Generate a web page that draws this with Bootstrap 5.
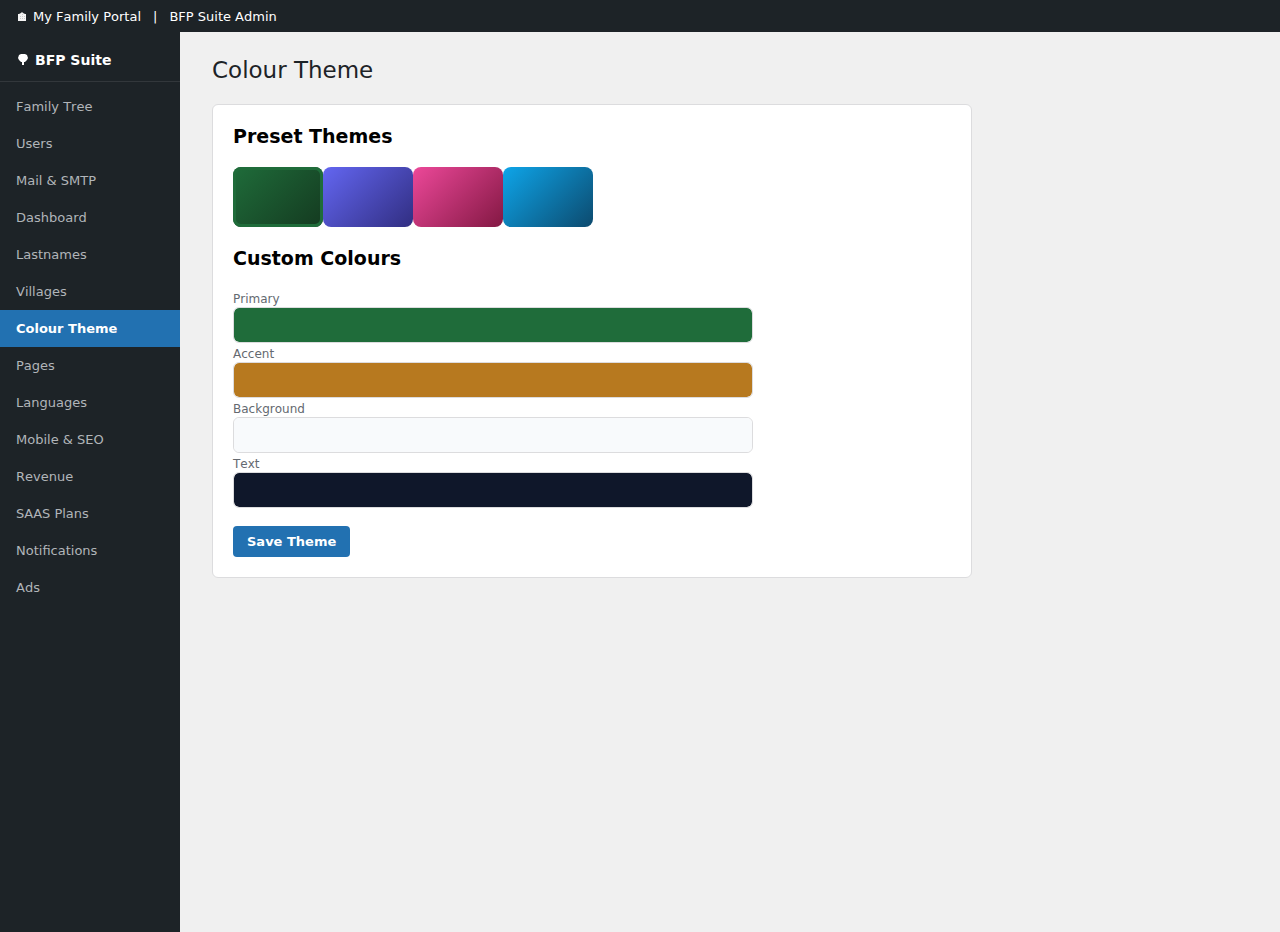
<!DOCTYPE html>
<html lang="en">
<head>
<meta charset="utf-8">
<meta name="viewport" content="width=device-width, initial-scale=1">
<title>Colour Theme</title>
<link href="https://cdn.jsdelivr.net/npm/bootstrap@5.3.0/dist/css/bootstrap.min.css" rel="stylesheet">
<style>
  body { font-family: "DejaVu Sans", sans-serif; font-size: 13px; line-height: 21px; font-kerning: none; color: #1d2327; background: #f0f0f0; }
  .topbar { height: 32px; background: #1d2327; color: #fff; gap: 12px; }
  .topbar a, .brand { color: #fff; text-decoration: none; }
  .site-link { gap: 4px; }
  .sidebar { width: 180px; background: #1d2327; }
  .brand { gap: 5px; height: 50px; padding: 8px 16px 0; font-size: 14px; font-weight: 700; border-bottom: 1px solid #32373b; }
  .menu { padding-top: 6px; }
  .menu .nav-link { padding: 8px 16px; color: #b1b5b9; transition: none; }
  .menu .nav-link:hover { color: #fff; }
  .menu .nav-link.active { background: #2271b1; color: #fff; font-weight: 700; }
  main { padding: 24px 32px; }
  h1 { font-size: 23px; line-height: 28px; font-weight: 400; margin: 0 0 20px; }
  h2 { font-size: 19px; line-height: 22px; font-weight: 700; color: #000; margin: 0 0 19px; }
  .panel { max-width: 760px; padding: 20px; border: 1px solid #dcdcde; border-radius: 6px; background: #fff; }
  .presets { margin: 20px 0; }
  .swatch { width: 90px; height: 60px; padding: 0; border: 0; border-radius: 8px; }
  .forest { background: linear-gradient(135deg, #1f6c3a, #143a20); box-shadow: inset 0 0 0 3px #1f6c3a; }
  .indigo { background: linear-gradient(135deg, #6366f1, #312e81); }
  .rose { background: linear-gradient(135deg, #ec4899, #831843); }
  .sky { background: linear-gradient(135deg, #0ea5e9, #0c4a6e); }
  .colours { max-width: 520px; margin-bottom: 18px; }
  .colours label { font-size: 12px; line-height: 16px; padding-top: 3px; color: #646970; }
  .colours input { height: 36px; padding: 0; border: 1px solid #dcdcde; border-radius: 6px; background: #fff; overflow: hidden; }
  .colours input::-webkit-color-swatch-wrapper { padding: 0; }
  .colours input::-webkit-color-swatch { border: 0; border-radius: 5px; }
  .save { padding: 5px 14px; border: 0; border-radius: 4px; background: #2271b1; color: #fff; font-size: 13px; line-height: 21px; font-weight: 700; }
</style>
</head>
<body class="d-flex flex-column min-vh-100">
<header class="topbar d-flex align-items-center px-3">
  <a class="site-link d-flex align-items-center" href="#">
    <svg width="13" height="14" viewBox="0 0 13 14" aria-hidden="true">
      <path fill="#f4f4f4" d="M2 5h1l2-1 1-1 1 1 2 1h1v7H2z"/>
      <path fill="#c8cacb" d="M4 7h1v1H4zM6 7h1v1H6zM8 7h1v1H8zM4 9h1v1H4zM6 9h1v1H6zM8 9h1v1H8zM6 5h1v1H6z"/>
    </svg>
    <span>My Family Portal</span>
  </a>
  <span>|</span>
  <a href="#">BFP Suite Admin</a>
</header>
<div class="d-flex flex-grow-1">
  <aside class="sidebar flex-shrink-0">
    <a class="brand d-flex align-items-center" href="#">
      <svg width="14" height="13" viewBox="0 0 14 13" aria-hidden="true">
        <path fill="#fff" d="M5 0h4l2 1 1 3-1 2-2 2H8v3H6V8H5L3 6 2 4l1-3z"/>
      </svg>
      <span>BFP Suite</span>
    </a>
    <nav class="menu nav flex-column" aria-label="Suite">
      <a class="nav-link" href="#">Family Tree</a>
      <a class="nav-link" href="#">Users</a>
      <a class="nav-link" href="#">Mail &amp; SMTP</a>
      <a class="nav-link" href="#">Dashboard</a>
      <a class="nav-link" href="#">Lastnames</a>
      <a class="nav-link" href="#">Villages</a>
      <a class="nav-link active" href="#" aria-current="page">Colour Theme</a>
      <a class="nav-link" href="#">Pages</a>
      <a class="nav-link" href="#">Languages</a>
      <a class="nav-link" href="#">Mobile &amp; SEO</a>
      <a class="nav-link" href="#">Revenue</a>
      <a class="nav-link" href="#">SAAS Plans</a>
      <a class="nav-link" href="#">Notifications</a>
      <a class="nav-link" href="#">Ads</a>
    </nav>
  </aside>
  <main class="flex-grow-1">
    <h1>Colour Theme</h1>
    <form class="panel">
      <h2>Preset Themes</h2>
      <div class="presets d-flex flex-wrap">
        <button type="button" class="swatch forest" aria-label="Green" aria-pressed="true"></button>
        <button type="button" class="swatch indigo" aria-label="Indigo"></button>
        <button type="button" class="swatch rose" aria-label="Pink"></button>
        <button type="button" class="swatch sky" aria-label="Blue"></button>
      </div>
      <h2>Custom Colours</h2>
      <div class="colours d-flex flex-column">
        <label for="primary">Primary</label>
        <input class="w-100" type="color" id="primary" value="#1f6c3a">
        <label for="accent">Accent</label>
        <input class="w-100" type="color" id="accent" value="#b7791f">
        <label for="background">Background</label>
        <input class="w-100" type="color" id="background" value="#f8fafc">
        <label for="text">Text</label>
        <input class="w-100" type="color" id="text" value="#0f172a">
      </div>
      <button type="submit" class="save">Save Theme</button>
    </form>
  </main>
</div>
<script src="https://cdn.jsdelivr.net/npm/bootstrap@5.3.0/dist/js/bootstrap.bundle.min.js"></script>
</body>
</html>
